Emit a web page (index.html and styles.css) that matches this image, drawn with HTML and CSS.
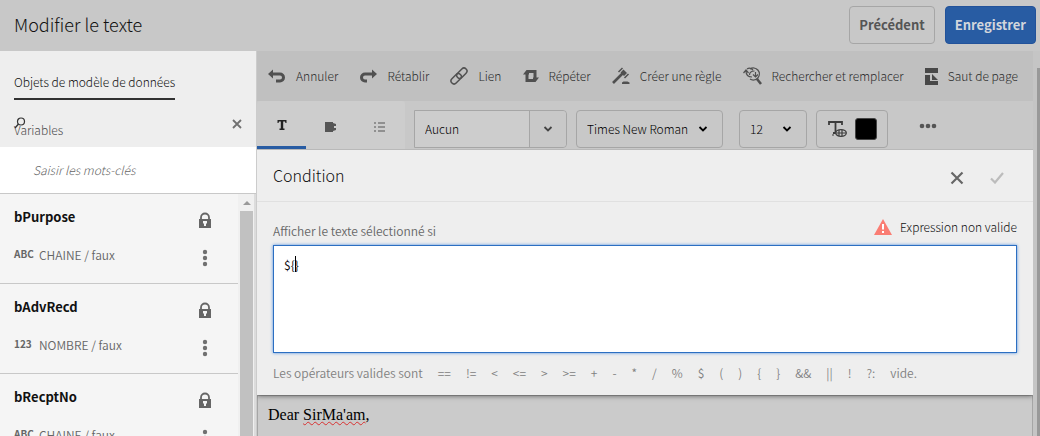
FILE: index.html
```html
<!DOCTYPE html>
<html lang="fr">
<head>
<meta charset="utf-8">
<meta name="viewport" content="width=device-width, initial-scale=1">
<title>Modifier le texte</title>
<link rel="stylesheet" href="styles.css">
</head>
<body>
<svg class="sprite" aria-hidden="true">
  <symbol id="lock" viewBox="0 0 14 16"><path d="M3 8V5.500a4 4 0 0 1 8 0V8" fill="none" stroke="currentColor" stroke-width="1.800"/><path fill="currentColor" fill-rule="evenodd" d="M1 7h12v9H1zM5 9v2l1 1v2h2v-2l1-1V9z"/></symbol>
  <symbol id="dots" viewBox="0 0 6 18"><g fill="currentColor"><circle cx="3" cy="3" r="2.200"/><circle cx="3" cy="9" r="2.200"/><circle cx="3" cy="15" r="2.200"/></g></symbol>
  <symbol id="chevron" viewBox="0 0 10 8"><path d="M1.500 2 5 5.500 8.500 2" fill="none" stroke="currentColor" stroke-width="1.800"/></symbol>
</svg>
<header class="header">
  <h1 class="header-title">Modifier le texte</h1>
  <button class="button" type="button">Précédent</button>
  <button class="button button-primary" type="button">Enregistrer</button>
</header>
<div class="layout">
  <aside class="sidebar">
    <nav class="tabs">
      <a class="tab tab-active" href="#objets">Objets de modèle de données</a>
      <div class="tab-row">
        <a class="tab" href="#variables">Variables</a>
        <svg class="search-icon" viewBox="0 0 12 12" aria-hidden="true"><circle cx="7" cy="4.500" r="3.500" fill="none" stroke="#333" stroke-width="1.200"/><path d="M4.500 7 1 11" stroke="#333" stroke-width="1.400"/></svg>
        <button class="icon-button" type="button" aria-label="Effacer"><svg width="10" height="10" viewBox="0 0 10 10"><path d="m1 1 8 8M9 1 1 9" stroke="#707070" stroke-width="1.800"/></svg></button>
      </div>
    </nav>
    <input class="search" type="text" placeholder="Saisir les mots-clés" aria-label="Saisir les mots-clés">
    <div class="list-area">
      <ul class="list">
        <li class="item"><h2 class="item-name">bPurpose</h2><svg class="lock"><use href="#lock"/></svg><p class="item-meta"><span class="item-type">ABC</span>CHAINE / faux</p><button class="icon-button more" type="button" aria-label="Actions"><svg width="6" height="18"><use href="#dots"/></svg></button></li>
        <li class="item"><h2 class="item-name">bAdvRecd</h2><svg class="lock"><use href="#lock"/></svg><p class="item-meta"><span class="item-type">123</span>NOMBRE / faux</p><button class="icon-button more" type="button" aria-label="Actions"><svg width="6" height="18"><use href="#dots"/></svg></button></li>
        <li class="item"><h2 class="item-name">bRecptNo</h2><svg class="lock"><use href="#lock"/></svg><p class="item-meta"><span class="item-type">ABC</span>CHAINE / faux</p><button class="icon-button more" type="button" aria-label="Actions"><svg width="6" height="18"><use href="#dots"/></svg></button></li>
      </ul>
      <div class="scrollbar"><div class="scroll-arrow"></div><div class="scroll-thumb"></div></div>
    </div>
  </aside>
  <main class="editor">
    <div class="actions">
      <button class="action" type="button"><svg width="18" height="16" viewBox="0 0 18 16"><path d="M4 6h8a3.500 3.500 0 0 1 0 7H8" fill="none" stroke="currentColor" stroke-width="3"/><path d="M0 6 5 1.500v9z" fill="currentColor"/></svg>Annuler</button>
      <button class="action" type="button"><svg width="18" height="16" viewBox="0 0 18 16"><path d="M14 6H6a3.500 3.500 0 0 0 0 7h2" fill="none" stroke="currentColor" stroke-width="3"/><path d="m18 6-5-4.500v9z" fill="currentColor"/></svg>Rétablir</button>
      <button class="action" type="button"><svg width="18" height="18" viewBox="0 0 18 18"><g transform="rotate(-45 9 9)" fill="none" stroke="currentColor" stroke-width="1.500"><rect x="-1" y="6" width="12" height="6" rx="3"/><rect x="7" y="6" width="12" height="6" rx="3"/></g></svg>Lien</button>
      <button class="action" type="button"><svg width="16" height="14" viewBox="0 0 16 14"><path d="M4 4v7.500h6M12 10V2.500H6" fill="none" stroke="currentColor" stroke-width="3"/><path d="M0 5.500 3.500 1H6v4.500zM16 8.500 12.500 13H10V8.500z" fill="currentColor"/></svg>Répéter</button>
      <button class="action" type="button"><svg width="18" height="18" viewBox="0 0 18 18"><path d="m1 16 9.500-9.500" stroke="currentColor" stroke-width="2.600"/><path d="m6.500 5 4-4M12.500 11l4-4" stroke="currentColor" stroke-width="1.500"/><path d="m8.500 5.500 3-3 3.500 3.500-3 3zM10 17v-1.500l1.500-1h4l2 1V17z" fill="currentColor"/></svg>Créer une règle</button>
      <button class="action" type="button"><svg width="19" height="18" viewBox="0 0 19 18"><g fill="none" stroke="currentColor"><path d="M7 2a6 6 0 1 1 0 10" stroke-width="1.300"/><path d="m14 12 4 5" stroke-width="2.600"/><path d="M.5 6 3 3l2.500 3M3 4q0 6 6 6M4 2q3-2 6 1M6.500 8q0-4 5-4M10 7.500l2.500 2.500L15 7.500M12.500 9V5" stroke-width="1.200"/></g></svg>Rechercher et remplacer</button>
      <button class="action" type="button"><svg width="13" height="17" viewBox="0 0 13 17"><path d="M0 0h13v5H0zM0 7h5v6h8v4H0zM7 6v6h6z" fill="#484848"/></svg>Saut de page</button>
    </div>
    <div class="format">
      <div class="format-tabs">
        <button class="format-tab format-tab-active" type="button" aria-label="Texte"><svg width="10" height="10" viewBox="0 0 10 10"><path d="M.5 0h9v3H8.500L8 1.500H6.200v7H7.500V10h-5V8.500h1.300v-7H2L1.500 3h-1z" fill="#222"/></svg></button>
        <button class="format-tab" type="button" aria-label="Paragraphe"><svg width="11" height="10" viewBox="0 0 11 10"><path d="M0 0h8v1l3 1v2H9v2h2v2L8 9v1H0z" fill="#555"/></svg></button>
        <button class="format-tab" type="button" aria-label="Liste"><svg width="11" height="10" viewBox="0 0 11 10"><path d="M0 1h2M0 5h2M0 9h2M4 1h7M4 5h7M4 9h7" stroke="#555" stroke-width="1.200"/></svg></button>
      </div>
      <div class="combo"><input class="combo-input" type="text" value="Aucun" aria-label="Style"><button class="combo-button" type="button" aria-label="Ouvrir"><svg width="10" height="8"><use href="#chevron"/></svg></button></div>
      <div class="select-box family"><select class="select" aria-label="Police"><option>Times New Roman</option></select><svg class="select-arrow"><use href="#chevron"/></svg></div>
      <div class="select-box size"><select class="select" aria-label="Taille"><option>12</option></select><svg class="select-arrow"><use href="#chevron"/></svg></div>
      <button class="color" type="button" aria-label="Couleur du texte"><svg width="19" height="17" viewBox="0 0 19 17"><path d="M1 4V1h13v3M7.500 1v11M5 12h3" fill="none" stroke="#3c3c3c" stroke-width="1.800"/><ellipse cx="13" cy="12" rx="5.300" ry="3.300" fill="#c9c9c9" stroke="#3c3c3c" stroke-width="1.300"/><path d="M8 12h10M11 9v6M14 9v6M4 14h2" stroke="#3c3c3c" stroke-width="1.200"/></svg><span class="swatch"></span></button>
      <button class="icon-button overflow" type="button" aria-label="Plus"><svg width="18" height="6" viewBox="0 0 18 6"><g fill="#555"><circle cx="3" cy="3" r="2.300"/><circle cx="9" cy="3" r="2.300"/><circle cx="15" cy="3" r="2.300"/></g></svg></button>
    </div>
    <section class="panel">
      <div class="panel-head">
        <h2 class="panel-title">Condition</h2>
        <button class="icon-button" type="button" aria-label="Annuler la condition"><svg width="14" height="14" viewBox="0 0 14 14"><path d="m1.500 1.500 11 11M12.500 1.500l-11 11" stroke="#666" stroke-width="2.200"/></svg></button>
        <button class="icon-button" type="button" aria-label="Valider"><svg width="14" height="12" viewBox="0 0 14 12"><path d="m1 6.500 4 4L13 1" fill="none" stroke="#bcbcbc" stroke-width="2.200"/></svg></button>
      </div>
      <div class="panel-body">
        <div class="field-head">
          <label class="field-label" for="expression">Afficher le texte sélectionné si</label>
          <p class="error"><svg width="18" height="16" viewBox="0 0 18 16"><path d="M9 0 18 16H0z" fill="#fa7d73"/><path d="M9 5v5.500M9 12v2" stroke="#fff" stroke-width="2"/></svg>Expression non valide</p>
        </div>
        <div class="expression-box"><textarea class="expression" id="expression" spellcheck="false">${}</textarea><span class="caret"></span></div>
        <p class="operators"><span>Les opérateurs valides sont</span><span>==</span><span>!=</span><span>&lt;</span><span>&lt;=</span><span>&gt;</span><span>&gt;=</span><span>+</span><span>-</span><span>*</span><span>/</span><span>%</span><span>$</span><span>(</span><span>)</span><span>{</span><span>}</span><span>&amp;&amp;</span><span>||</span><span>!</span><span>?:</span><span>vide.</span></p>
      </div>
    </section>
    <div class="document">Dear <span class="misspelled">SirMa'am</span>,</div>
  </main>
  <div class="page-scroll"><div class="page-thumb"></div></div>
</div>
</body>
</html>
```
FILE: styles.css
```css
* { box-sizing: border-box; }
body {
  margin: 0;
  height: 100vh;
  display: flex;
  flex-direction: column;
  overflow: hidden;
  background: #c8c8c8;
  color: #111;
  font: 300 12px/18px "Noto Sans CJK SC", "Noto Sans", sans-serif;
}
h1, h2, p, ul { margin: 0; padding: 0; }
button, input, select, textarea { font: inherit; color: inherit; margin: 0; }
button { padding: 0; cursor: pointer; }
svg { flex: none; display: block; }
.sprite { position: absolute; width: 0; height: 0; }
.icon-button { border: 0; background: none; display: flex; align-items: center; justify-content: center; }

.header { display: flex; align-items: center; gap: 10px; padding: 6px 4px 7px 14px; flex: none; }
.header-title { flex: 1; font-size: 18px; line-height: 24px; font-weight: 300; padding-bottom: 2px; }
.button {
  height: 38px;
  padding: 0 9px;
  border: 1px solid #a6a6a6;
  border-radius: 4px;
  background: #c8c8c8;
  color: #555;
  font-size: 13px;
  font-weight: 700;
}
.button-primary { background: #285ca3; border-color: #22529a; color: #d2d6dc; }

.layout { flex: 1; display: flex; min-height: 0; }
.sidebar {
  width: 257px;
  flex: none;
  display: flex;
  flex-direction: column;
  background: #eee;
  border-right: 1px solid #ccc;
}
.tabs { padding: 22px 14px 0; height: 96px; display: flex; flex-direction: column; align-items: flex-start; flex: none; }
.tab { color: #4c4c4c; text-decoration: none; }
.tab-active { color: #111; padding-bottom: 7px; border-bottom: 2px solid #323232; }
.tab-row { position: relative; width: 100%; display: flex; align-items: flex-start; justify-content: space-between; padding-top: 21px; }
.tab-row .icon-button { height: 6px; }
.search-icon { position: absolute; left: 0; top: 17px; width: 12px; height: 12px; }
.search {
  height: 47px;
  flex: none;
  width: 100%;
  border: 0;
  border-bottom: 1px solid #c8c8c8;
  padding: 0 33px 2px;
  background: #fff;
  font-style: italic;
}
.search::placeholder { color: #666; opacity: 1; }
.list-area { flex: 1; display: flex; min-height: 0; background: #f5f5f5; }
.list { flex: 1; list-style: none; overflow: hidden; }
.item {
  height: 90px;
  border-bottom: 1px solid #c8c8c8;
  display: grid;
  grid-template-columns: 1fr 14px;
  grid-template-rows: 22px 26px;
  row-gap: 18px;
  padding: 12px 26px 0 14px;
}
.item-name { font-size: 13px; line-height: 22px; }
.lock { width: 14px; height: 16px; color: #666; align-self: end; }
.item-meta { color: #666; font-weight: 350; display: flex; align-items: flex-start; gap: 7px; }
.item-type { width: 18px; font-size: 10px; font-weight: 700; line-height: 16px; }
.more { color: #707070; height: 24px; }
.scrollbar { width: 18px; background: #f0f0f0; border-right: 2px solid #dcdcdc; padding: 7px 1px 0 2px; display: flex; flex-direction: column; align-items: center; }
.scroll-arrow { border: 4px solid transparent; border-top: 0; border-bottom-color: #999; }
.scroll-thumb { margin-top: 6px; flex: 1; width: 13px; background: #c1c1c1; }

.editor { flex: 1; min-width: 0; display: flex; flex-direction: column; }
.actions { height: 50px; flex: none; background: #c0c0c0; display: flex; align-items: center; justify-content: space-between; padding: 0 15px 0 11px; color: #2c2c2c; }
.actions svg { color: #505050; }
.action { border: 0; background: none; display: flex; align-items: center; gap: 10px; white-space: nowrap; }
.format { height: 49px; flex: none; display: flex; align-items: flex-end; gap: 9px; border-bottom: 1px solid #b9b9b9; }
.format-tabs { display: flex; height: 48px; width: 148px; background: #cdcdcd; border-radius: 3px 3px 0 0; }
.format-tab { width: 49px; border: 0; background: none; display: flex; align-items: center; justify-content: center; padding-top: 3px; }
.format-tab-active { border-bottom: 3px solid #285ca3; }
.combo, .select-box, .color { height: 38px; margin-bottom: 1px; border: 1px solid #a6a6a6; border-radius: 4px; color: #000; }
.combo { display: flex; width: 153px; background: #cdcdcd; border-radius: 0 4px 4px 0; }
.combo-input { flex: 1; min-width: 0; border: 0; background: none; padding: 0 10px; }
.combo-button { width: 37px; border: 0; border-left: 1px solid #a6a6a6; background: #c8c8c8; color: #444; display: flex; align-items: center; justify-content: center; border-radius: 0 4px 4px 0; }
.select-box { position: relative; }
.family { width: 147px; }
.size { width: 68px; margin-left: 7px; }
.select { appearance: none; width: 100%; height: 100%; border: 0; background: none; padding: 0 10px; }
.select-arrow { position: absolute; right: 14px; top: 14px; width: 10px; height: 8px; pointer-events: none; }
.color { width: 72px; background: none; display: flex; align-items: center; justify-content: center; gap: 8px; }
.swatch { width: 22px; height: 22px; border-radius: 3px; background: #000; border: 1px solid #444; }
.overflow { height: 46px; width: 24px; margin-left: 19px; }

.panel { flex: none; background: #eee; position: relative; box-shadow: 0 1px 5px rgba(0, 0, 0, .5); clip-path: inset(0 0 -8px 0); }
.panel-head { display: flex; align-items: center; gap: 26px; height: 52px; padding: 0 29px 0 16px; border-bottom: 1px solid #e0e0e0; }
.panel-head .icon-button { padding-top: 4px; }
.panel-title { flex: 1; font-size: 16px; line-height: 24px; font-weight: 300; padding-bottom: 1px; }
.panel-body { padding: 15px 16px 13px; }
.field-head { display: flex; justify-content: space-between; align-items: flex-end; height: 26px; }
.field-label { color: #666; line-height: 24px; font-weight: 350; }
.error { display: flex; align-items: center; gap: 8px; height: 26px; padding-bottom: 6px; }
.expression-box { position: relative; margin-top: 2px; }
.expression { display: block; width: 100%; height: 108px; resize: none; border: 1px solid #2c6fc2; outline: 0; box-shadow: 0 0 3px #4f8fe0; background: #fff; padding: 10px; border-radius: 0; font-weight: 400; }
.caret { position: absolute; left: 22px; top: 11px; width: 1px; height: 16px; background: #000; }
.operators { display: flex; gap: 15px; padding-top: 11px; color: #808080; font-weight: 350; white-space: nowrap; }
.document { flex: 1; border: 1px solid #a6a6a6; border-bottom: 0; background: #cbcbcb; padding: 9px 10px; color: #000; font: 16px/20px "Liberation Serif", serif; }
.misspelled { text-decoration: underline wavy #d83030 1px; }
.page-scroll { width: 7px; flex: none; background: #c5c5c5; padding: 17px 0 0 4px; display: flex; }
.page-thumb { flex: 1; background: #999; }
```
